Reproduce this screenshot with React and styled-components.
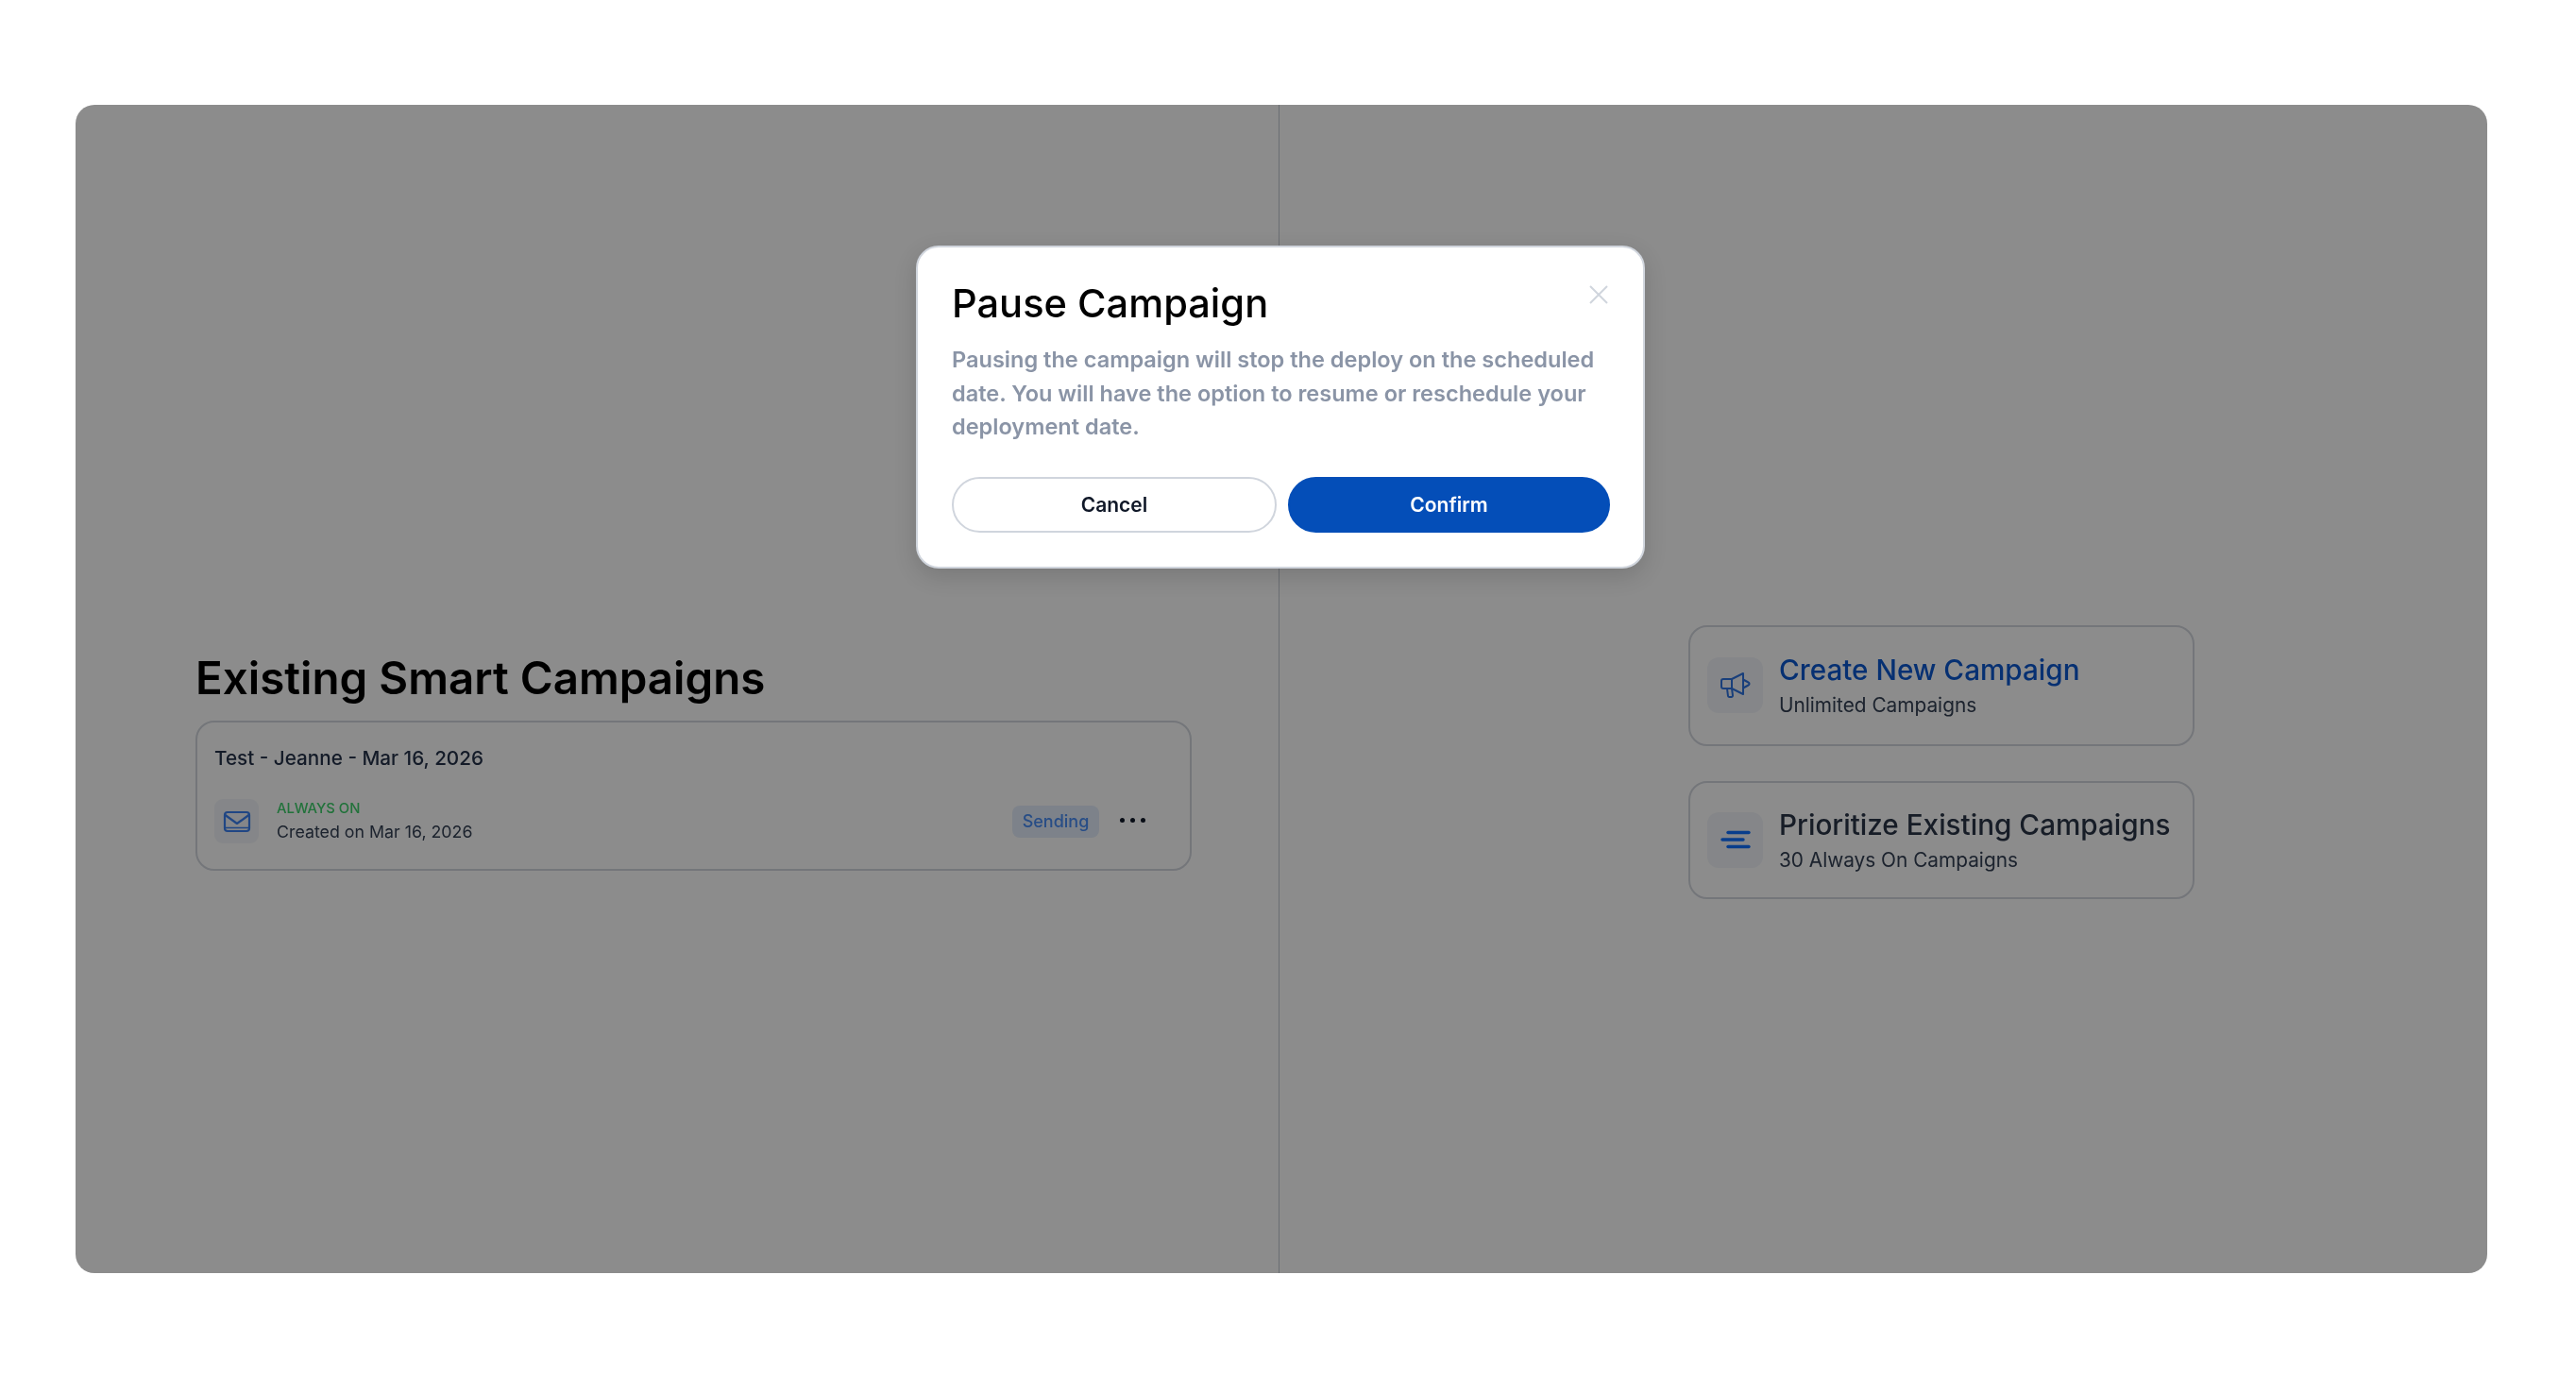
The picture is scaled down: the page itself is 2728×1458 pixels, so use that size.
import React from 'react';
import styled, { createGlobalStyle } from 'styled-components';

const GlobalStyle = createGlobalStyle`
  * { box-sizing: border-box; }
  html, body { margin: 0; padding: 0; background: #fff; }
  body { font-family: Inter, "Liberation Sans", sans-serif; }
`;

const Page = styled.div`
  width: 2728px;
  height: 1458px;
  padding: 111px 94px 110px 80px;
`;

const Panel = styled.div`
  position: relative;
  height: 100%;
  display: grid;
  grid-template-columns: 1275px 1fr;
  border-radius: 20px;
  overflow: hidden;
  background: #fff;
`;

const LeftColumn = styled.section`
  display: flex;
  flex-direction: column;
  justify-content: center;
  padding: 152px 92px 0 127px;
  border-right: 1px solid #c4c9d2;
  filter: blur(0.6px);
`;

const RightColumn = styled.section`
  display: flex;
  flex-direction: column;
  justify-content: center;
  gap: 37px;
  padding: 154px 0 0 433px;
  filter: blur(0.6px);
`;

const Heading = styled.h1`
  margin: 0 0 16px;
  font-size: 47.5px;
  line-height: 58px;
  font-weight: 600;
  color: #000;
`;

const CampaignCard = styled.div`
  height: 159px;
  padding: 23px 47px 0 18px;
  border: 2px solid #d3d7de;
  border-radius: 20px;
`;

const CampaignName = styled.div`
  font-size: 20.7px;
  line-height: 30px;
  font-weight: 500;
  color: #25324a;
`;

const CampaignRow = styled.div`
  display: flex;
  align-items: center;
  margin-top: 28px;
`;

const IconBox = styled.div`
  flex: none;
  display: flex;
  align-items: center;
  justify-content: center;
  width: ${(p) => p.$size}px;
  height: ${(p) => p.$size}px;
  border-radius: ${(p) => (p.$size > 50 ? 12 : 9)}px;
  background: #f2f5f9;
`;

const CampaignMeta = styled.div`
  flex: 1;
  margin-left: 19px;
`;

const AlwaysOn = styled.div`
  font-size: 14.8px;
  line-height: 20px;
  font-weight: 500;
  color: #3fd06c;
`;

const CreatedOn = styled.div`
  margin-top: 3px;
  font-size: 17.8px;
  line-height: 24px;
  color: #344054;
`;

const StatusBadge = styled.span`
  display: flex;
  align-items: center;
  justify-content: center;
  width: 92px;
  height: 34px;
  border-radius: 8px;
  background: #e3edfb;
  font-size: 18px;
  font-weight: 500;
  color: #4a8df5;
`;

const Dots = styled.div`
  display: flex;
  gap: 6px;
  margin: -3px 0 0 22px;
`;

const Dot = styled.i`
  width: 5px;
  height: 5px;
  border-radius: 50%;
  background: #101828;
`;

const ActionCard = styled.div`
  display: flex;
  align-items: center;
  gap: 17px;
  width: 536px;
  height: ${(p) => p.$height}px;
  padding: 0 18px;
  border: 2px solid #d3d7de;
  border-radius: 20px;
`;

const ActionTitle = styled.div`
  font-size: 29.7px;
  line-height: 38px;
  font-weight: 500;
  white-space: nowrap;
  color: ${(p) => (p.$active ? '#0c58d0' : '#2a3547')};
`;

const ActionSub = styled.div`
  margin-top: 5px;
  font-size: 20.8px;
  line-height: 28px;
  color: #344054;
`;

const Overlay = styled.div`
  position: absolute;
  inset: 0;
  background: rgba(0, 0, 0, 0.45);
`;

const Modal = styled.div`
  position: absolute;
  left: 890px;
  top: 149px;
  width: 772px;
  height: 342px;
  padding: 34px 34px 0 36px;
  border: 2px solid #d0d5dd;
  border-radius: 24px;
  background: #fff;
  box-shadow: 0 8px 24px rgba(0, 0, 0, 0.14);
  filter: blur(0.5px);
`;

const CloseIcon = styled.svg`
  position: absolute;
  top: 40px;
  right: 37px;
`;

const ModalTitle = styled.h2`
  margin: 0;
  font-size: 41.6px;
  line-height: 50px;
  font-weight: 500;
  color: #000;
`;

const ModalText = styled.p`
  margin: 17px 0 0;
  font-size: 23.55px;
  line-height: 35.5px;
  font-weight: 580;
  color: #8a94a6;
`;

const ModalActions = styled.div`
  display: grid;
  grid-template-columns: 344px 341px;
  gap: 12px;
  margin-top: 35px;
`;

const ModalButton = styled.button`
  height: 59px;
  border-radius: 30px;
  border: 2px solid ${(p) => (p.$primary ? '#044eb8' : '#d0d5dd')};
  background: ${(p) => (p.$primary ? '#044eb8' : '#fff')};
  font-family: inherit;
  font-size: 21px;
  font-weight: 600;
  color: ${(p) => (p.$primary ? '#fff' : '#101828')};
`;

const MailIcon = () => (
  <svg width="30" height="24" viewBox="0 0 30 24" fill="none" stroke="#3b80f0" strokeWidth="2.2" strokeLinecap="round" strokeLinejoin="round">
    <rect x="2" y="2" width="26" height="20" rx="3" />
    <path d="M2.5 5l12.5 9 12.5-9" />
    <path d="M3 18.5h24" strokeWidth="1.4" />
  </svg>
);

const MegaphoneIcon = () => (
  <svg width="32" height="28" viewBox="0 0 32 28" fill="none" stroke="#2f73e0" strokeWidth="2" strokeLinecap="round" strokeLinejoin="round">
    <path d="M12 7H3a2 2 0 0 0-2 2v6a2 2 0 0 0 2 2h9l12 6V1z" />
    <path d="M12 7v10" />
    <path d="M7 17l1 8a1.5 1.5 0 0 0 1.5 1h2a1.5 1.5 0 0 0 1.5-1.6l-1-7.4" />
    <path d="M24 7.5l5.5 3a1.6 1.6 0 0 1 0 3L24 16.5" />
  </svg>
);

const LinesIcon = () => (
  <svg width="32" height="20" viewBox="0 0 32 20" fill="none" stroke="#1070ff" strokeWidth="3.4" strokeLinecap="round">
    <path d="M8 2.5h22" />
    <path d="M2 10h22" />
    <path d="M8 17.5h22" />
  </svg>
);

const App = () => {
  return (
    <Page>
      <GlobalStyle />
      <Panel>
        <LeftColumn>
          <Heading>Existing Smart Campaigns</Heading>
          <CampaignCard>
            <CampaignName>Test - Jeanne - Mar 16, 2026</CampaignName>
            <CampaignRow>
              <IconBox $size={47}>
                <MailIcon />
              </IconBox>
              <CampaignMeta>
                <AlwaysOn>ALWAYS ON</AlwaysOn>
                <CreatedOn>Created on Mar 16, 2026</CreatedOn>
              </CampaignMeta>
              <StatusBadge>Sending</StatusBadge>
              <Dots>
                <Dot />
                <Dot />
                <Dot />
              </Dots>
            </CampaignRow>
          </CampaignCard>
        </LeftColumn>
        <RightColumn>
          <ActionCard $height={128}>
            <IconBox $size={59}>
              <MegaphoneIcon />
            </IconBox>
            <div>
              <ActionTitle $active>Create New Campaign</ActionTitle>
              <ActionSub>Unlimited Campaigns</ActionSub>
            </div>
          </ActionCard>
          <ActionCard $height={125}>
            <IconBox $size={59}>
              <LinesIcon />
            </IconBox>
            <div>
              <ActionTitle>Prioritize Existing Campaigns</ActionTitle>
              <ActionSub>30 Always On Campaigns</ActionSub>
            </div>
          </ActionCard>
        </RightColumn>
        <Overlay />
        <Modal>
          <CloseIcon width="20" height="20" viewBox="0 0 20 20" fill="none" stroke="#d0d5dd" strokeWidth="2">
            <path d="M1 1l18 18M19 1L1 19" />
          </CloseIcon>
          <ModalTitle>Pause Campaign</ModalTitle>
          <ModalText>
            Pausing the campaign will stop the deploy on the scheduled date. You will have the option to resume or reschedule your deployment date.
          </ModalText>
          <ModalActions>
            <ModalButton>Cancel</ModalButton>
            <ModalButton $primary>Confirm</ModalButton>
          </ModalActions>
        </Modal>
      </Panel>
    </Page>
  );
};

export default App;
